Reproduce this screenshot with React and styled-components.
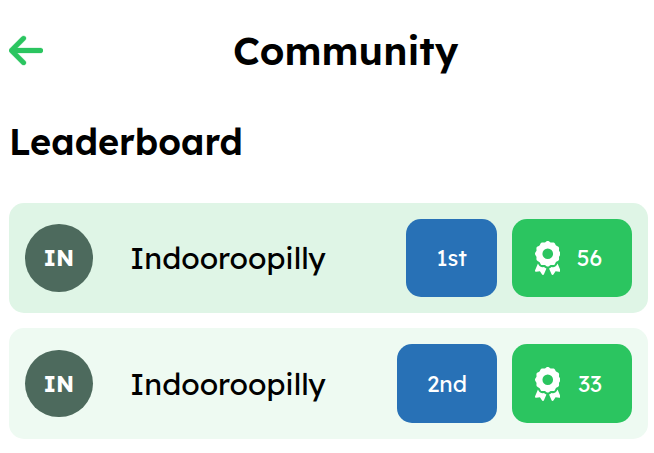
import React from "react";
import styled, { createGlobalStyle } from "styled-components";
import { FaArrowLeft, FaAward } from "react-icons/fa6";

const GlobalStyle = createGlobalStyle`
  * { box-sizing: border-box; }
  body {
    margin: 0;
    background: #fff;
    color: #000;
    font-family: Lexend, Inter, "Open Sans", sans-serif;
    overflow: hidden;
  }
`;

const Page = styled.main`
  width: 654px;
  height: 453px;
  padding: 0 6px 0 9px;
`;

const Header = styled.header`
  display: grid;
  grid-template-columns: 35px 1fr;
  align-items: center;
  height: 101px;
`;

const BackButton = styled.button`
  display: flex;
  padding: 0;
  border: 0;
  background: none;
  color: #2bc560;
`;

const BackIcon = styled(FaArrowLeft)`
  width: 34.1px;
  height: 39px;
  stroke: currentColor;
  stroke-width: 4px;
`;

const Title = styled.h1`
  margin: 0 0 0 189px;
  font-size: 39px;
  line-height: 50px;
  font-weight: 600;
`;

const Subtitle = styled.h2`
  margin: 16px 0 36.8px;
  font-size: 36px;
  line-height: 49px;
  font-weight: 600;
`;

const Board = styled.section`
  display: flex;
  flex-direction: column;
  gap: 15px;
`;

const Row = styled.article`
  display: flex;
  align-items: center;
  height: 110.4px;
  padding: 16px;
  border-radius: 15px;
  background: ${(p) => (p.$leading ? "#dff5e6" : "#eefaf2")};
`;

const Avatar = styled.div`
  display: flex;
  align-items: center;
  justify-content: center;
  width: 67.5px;
  height: 67.5px;
  padding-top: 0.6px;
  border-radius: 50%;
  background: #4d6a5d;
  color: #fff;
  font-size: 22.5px;
  line-height: 28px;
  font-weight: 700;
`;

const Name = styled.span`
  flex: 1;
  margin-left: 37.5px;
  padding-top: 0.5px;
  font-size: 30px;
  line-height: 40px;
  font-weight: 400;
`;

const Chip = styled.div`
  display: flex;
  align-items: center;
  align-self: stretch;
  justify-content: center;
  padding-top: 0.6px;
  border-radius: 15px;
  color: #fff;
  font-size: 22.5px;
  line-height: 28px;
  font-weight: 400;
`;

const Rank = styled(Chip)`
  width: ${(p) => p.$width}px;
  background: #2871b6;
`;

const Score = styled(Chip)`
  width: 120px;
  margin-left: 15px;
  padding: 0.6px 30px 0 22.5px;
  justify-content: space-between;
  background: #2bc560;
`;

const AwardIcon = styled(FaAward)`
  width: 25.5px;
  height: 34px;
`;

const teams = [
  { name: "Indooroopilly", initials: "IN", rank: "1st", score: 56, rankWidth: 91 },
  { name: "Indooroopilly", initials: "IN", rank: "2nd", score: 33, rankWidth: 100 },
];

export default function App() {
  return (
    <Page>
      <GlobalStyle />
      <Header>
        <BackButton aria-label="Back"><BackIcon /></BackButton>
        <Title>Community</Title>
      </Header>
      <Subtitle>Leaderboard</Subtitle>
      <Board>
        {teams.map((team, i) => (
          <Row key={team.rank} $leading={i === 0}>
            <Avatar>{team.initials}</Avatar>
            <Name>{team.name}</Name>
            <Rank $width={team.rankWidth}>{team.rank}</Rank>
            <Score><AwardIcon /><span>{team.score}</span></Score>
          </Row>
        ))}
      </Board>
    </Page>
  );
}
